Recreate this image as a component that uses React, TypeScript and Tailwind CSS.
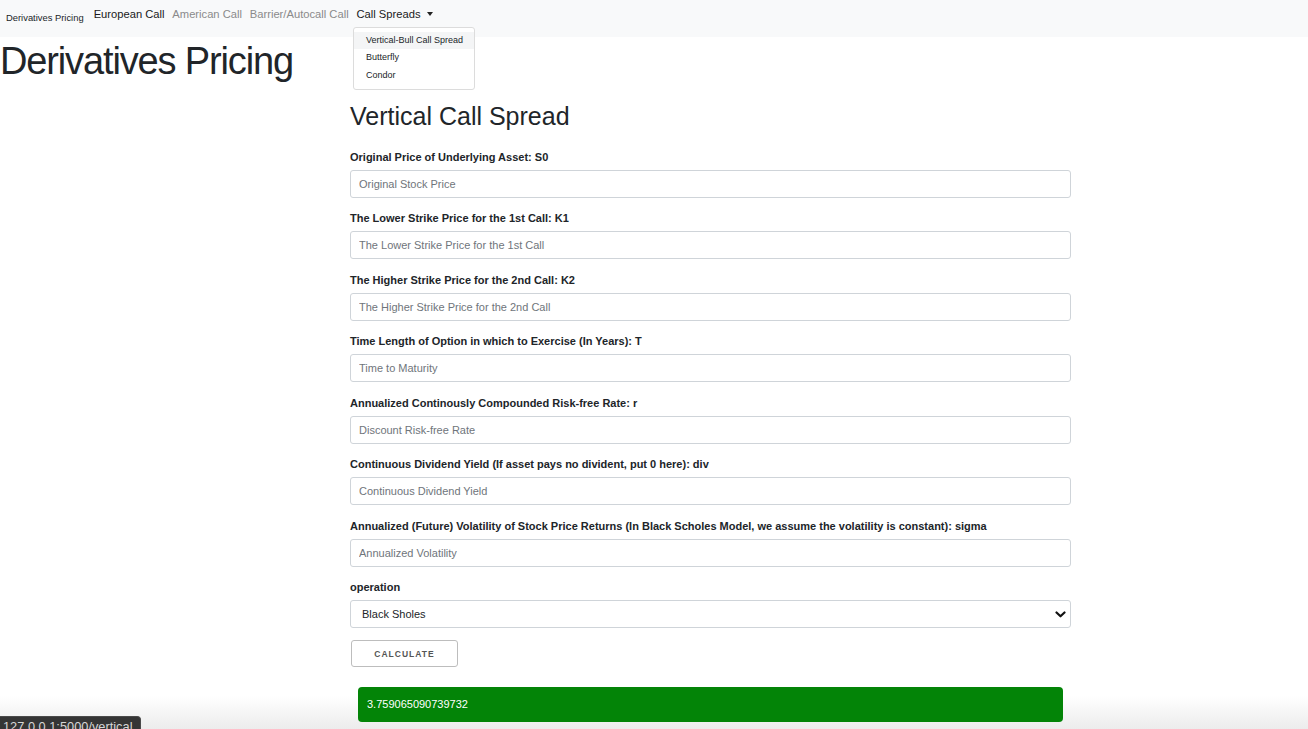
import React from "react";

const fields = [
  { label: "Original Price of Underlying Asset: S0", ph: "Original Stock Price" },
  { label: "The Lower Strike Price for the 1st Call: K1", ph: "The Lower Strike Price for the 1st Call" },
  { label: "The Higher Strike Price for the 2nd Call: K2", ph: "The Higher Strike Price for the 2nd Call" },
  { label: "Time Length of Option in which to Exercise (In Years): T", ph: "Time to Maturity" },
  { label: "Annualized Continously Compounded Risk-free Rate: r", ph: "Discount Risk-free Rate" },
  { label: "Continuous Dividend Yield (If asset pays no divident, put 0 here): div", ph: "Continuous Dividend Yield" },
  {
    label:
      "Annualized (Future) Volatility of Stock Price Returns (In Black Scholes Model, we assume the volatility is constant): sigma",
    ph: "Annualized Volatility",
  },
];

export default function App() {
  return (
    <div
      className="relative h-[729px] w-[1308px] overflow-hidden text-[#212529] bg-[linear-gradient(to_bottom,#ffffff_0px,#ffffff_696px,#ececec_729px)]"
      style={{ fontFamily: '"Liberation Sans", Arial, Helvetica, sans-serif' }}
    >
      {/* Navbar */}
      <nav className="relative h-[37px] bg-[#f8f9fa] flex items-start">
        <span className="ml-[6px] mt-[10.5px] text-[9.4px] leading-[14px] text-[#212529] whitespace-nowrap">Derivatives Pricing</span>
        <div className="ml-[10px] mt-[6px] flex gap-[7.8px] text-[11.2px] leading-[16px] whitespace-nowrap">
          <span className="text-[#1a1a1a]">European Call</span>
          <span className="text-[#8a8a8a]">American Call</span>
          <span className="text-[#8a8a8a]">Barrier/Autocall Call</span>
          <span className="text-[#1a1a1a] flex items-center">
            Call Spreads
            <span className="ml-[6px] inline-block w-0 h-0 border-l-[3.5px] border-r-[3.5px] border-t-[4px] border-l-transparent border-r-transparent border-t-[#222] mb-[1px]" />
          </span>
        </div>
        {/* dropdown menu */}
        <div className="absolute left-[353px] top-[27px] w-[122px] h-[63px] bg-white border border-[#dcdcdc] rounded-[3px] pt-[3.5px] z-10 text-[9px] text-[#212529] whitespace-nowrap">
          <div className="h-[17.5px] leading-[17.5px] px-[12px] bg-[#f4f5f6]">Vertical-Bull Call Spread</div>
          <div className="h-[17.5px] leading-[17.5px] px-[12px]">Butterfly</div>
          <div className="h-[17.5px] leading-[17.5px] px-[12px]">Condor</div>
        </div>
      </nav>

      <h1 className="mt-[2px] text-[38px] leading-[1.2] tracking-[-0.03em] text-[#212529] font-normal whitespace-nowrap">
        Derivatives Pricing
      </h1>

      <main className="ml-[350px] w-[721px]">
        <h2 className="mt-[16.5px] mb-[17.5px] text-[25px] leading-[1.2] font-normal text-[#212529] whitespace-nowrap">
          Vertical Call Spread
        </h2>

        {fields.map((f) => (
          <div key={f.label} className="mb-[12.5px]">
            <label className="block text-[11px] leading-[16px] font-bold mb-[5px] whitespace-nowrap">{f.label}</label>
            <input
              className="block w-full h-[28px] border border-[#cfd4d9] rounded-[3px] px-[8px] text-[11px] bg-white placeholder:text-[#6f757b] outline-none"
              placeholder={f.ph}
            />
          </div>
        ))}

        <div>
          <label className="block text-[11px] leading-[16px] font-bold mb-[5px]">operation</label>
          <div className="relative h-[28px] border border-[#cfd4d9] rounded-[3px] bg-white flex items-center px-[11px] text-[11px] text-[#212529]">
            Black Sholes
            <svg
              className="absolute right-[4px] top-[9.5px]"
              width="11"
              height="7"
              viewBox="0 0 11 7"
              fill="none"
            >
              <path d="M1.5 1.5 L5.5 5.3 L9.5 1.5" stroke="#111" strokeWidth="2.2" strokeLinecap="round" strokeLinejoin="round" />
            </svg>
          </div>
        </div>

        <button className="mt-[12px] ml-[1px] w-[107px] h-[27px] border border-[#bdbdbd] rounded-[3px] bg-white text-[8.5px] font-bold tracking-[1px] text-[#555] pt-[1.5px]">
          CALCULATE
        </button>

        <div className="mt-[20px] mx-[8px] h-[34.5px] rounded-[4px] bg-[#038407] flex items-center px-[9px] text-[11px] text-white">
          3.759065090739732
        </div>
      </main>

      {/* status bubble */}
      <div className="absolute left-0 top-[716px] w-[141px] h-[20px] bg-[#353535] rounded-tr-[4px] border-t border-r border-[#4a4a4a] text-[#d6d6d6] text-[12.8px] leading-[18px] pl-[3px] pt-[1px] whitespace-nowrap">
        127.0.0.1:5000/vertical
      </div>
    </div>
  );
}
